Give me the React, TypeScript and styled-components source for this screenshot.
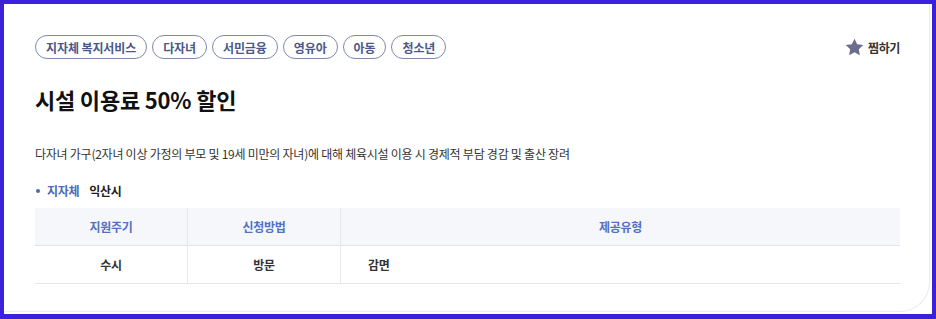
import styled, { createGlobalStyle } from "styled-components";

const GlobalStyle = createGlobalStyle`
  html, body {
    margin: 0;
    padding: 0;
    background: #ffffff;
  }
  body {
    font-family: "Noto Sans CJK KR", "Noto Sans", sans-serif;
    color: #222;
  }
`;

const Frame = styled.div`
  width: 936px;
  height: 319px;
  box-sizing: border-box;
  border: 4px solid #3b21d9;
  border-bottom-width: 5px;
  background: #ffffff;
  display: flex;
  padding: 0 2px 2px 0;
`;

const Card = styled.div`
  flex: 1;
  background: #ffffff;
  border-right: 1px solid #ececf1;
  border-bottom: 1px solid #ececf1;
  border-bottom-right-radius: 30px;
  padding: 31px 29px 0 31px;
  display: flex;
  flex-direction: column;
`;

const TopRow = styled.div`
  display: flex;
  justify-content: space-between;
  align-items: center;
`;

const Tags = styled.div`
  display: flex;
  gap: 5px;
`;

const Tag = styled.span`
  height: 24px;
  box-sizing: border-box;
  padding: 0 10px;
  border: 1px solid #7e89ad;
  border-radius: 12px;
  display: flex;
  align-items: center;
  font-size: 12px;
  font-weight: 600;
  letter-spacing: -0.1px;
  color: #4a5789;
`;

const Bookmark = styled.button`
  border: none;
  background: none;
  padding: 0;
  display: flex;
  align-items: center;
  gap: 4px;
  font-family: inherit;
  font-size: 12px;
  font-weight: 700;
  letter-spacing: -0.4px;
  color: #333;
  cursor: pointer;
`;

const Title = styled.h2`
  margin: 25px 0 0;
  font-size: 22px;
  font-weight: 700;
  letter-spacing: -0.2px;
  line-height: 30px;
  color: #111;
`;

const Desc = styled.p`
  margin: 30px 0 0;
  font-size: 12px;
  line-height: 20px;
  letter-spacing: -0.25px;
  color: #333;
`;

const Info = styled.div`
  margin-top: 17px;
  display: flex;
  align-items: center;
  font-size: 12px;
  font-weight: 700;
  line-height: 20px;
  letter-spacing: -0.3px;
`;

const Bullet = styled.span`
  width: 4px;
  height: 4px;
  border-radius: 50%;
  background: #4f68b8;
  margin: 0 7px 0 1px;
`;

const InfoLabel = styled.span`
  color: #4f68b8;
  margin-right: 10px;
`;

const InfoValue = styled.span`
  color: #222;
`;

const Table = styled.div`
  margin-top: 7px;
  display: grid;
  grid-template-columns: 153px 153px 1fr;
`;

const Cell = styled.div<{ $head?: boolean; $left?: boolean; $last?: boolean }>`
  height: 37px;
  display: flex;
  align-items: center;
  justify-content: ${(p) => (p.$left ? "flex-start" : "center")};
  padding-left: ${(p) => (p.$left ? "27px" : "0")};
  background: ${(p) => (p.$head ? "#f5f7fb" : "#ffffff")};
  border-bottom: 1px solid ${(p) => (p.$head ? "#e1e4ec" : "#e6e7eb")};
  border-right: ${(p) => (p.$last ? "none" : "1px solid #e6e8ee")};
  font-size: 12px;
  font-weight: ${(p) => (p.$head ? 600 : 700)};
  letter-spacing: -0.3px;
  color: ${(p) => (p.$head ? "#5470c2" : "#333")};
`;

function Star() {
  return (
    <svg width="19" height="18" viewBox="0 0 24 23" aria-hidden="true">
      <path
        d="M12 0.8l3.4 7.1 7.8 1-5.7 5.4 1.4 7.7L12 18.3 5.1 22l1.4-7.7L0.8 8.9l7.8-1z"
        fill="#6b6d8b"
      />
    </svg>
  );
}

const tags = ["지자체 복지서비스", "다자녀", "서민금융", "영유아", "아동", "청소년"];

export default function App() {
  return (
    <>
      <GlobalStyle />
      <Frame>
        <Card>
          <TopRow>
            <Tags>
              {tags.map((t) => (
                <Tag key={t}>{t}</Tag>
              ))}
            </Tags>
            <Bookmark>
              <Star />
              찜하기
            </Bookmark>
          </TopRow>
          <Title>시설 이용료 50% 할인</Title>
          <Desc>
            다자녀 가구(2자녀 이상 가정의 부모 및 19세 미만의 자녀)에 대해 체육시설 이용 시 경제적 부담 경감 및 출산 장려
          </Desc>
          <Info>
            <Bullet />
            <InfoLabel>지자체</InfoLabel>
            <InfoValue>익산시</InfoValue>
          </Info>
          <Table>
            <Cell $head>지원주기</Cell>
            <Cell $head>신청방법</Cell>
            <Cell $head $last>
              제공유형
            </Cell>
            <Cell>수시</Cell>
            <Cell>방문</Cell>
            <Cell $left $last>
              감면
            </Cell>
          </Table>
        </Card>
      </Frame>
    </>
  );
}
